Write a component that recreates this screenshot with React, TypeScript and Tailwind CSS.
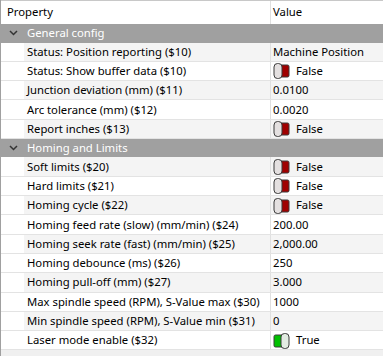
import React from "react";

type Item = { label: string; value: string; toggle?: boolean; on?: boolean };
type Group = { title: string; items: Item[] };

const groups: Group[] = [
  {
    title: "General config",
    items: [
      { label: "Status: Position reporting ($10)", value: "Machine Position" },
      { label: "Status: Show buffer data ($10)", value: "False", toggle: true },
      { label: "Junction deviation (mm) ($11)", value: "0.0100" },
      { label: "Arc tolerance (mm) ($12)", value: "0.0020" },
      { label: "Report inches ($13)", value: "False", toggle: true },
    ],
  },
  {
    title: "Homing and Limits",
    items: [
      { label: "Soft limits ($20)", value: "False", toggle: true },
      { label: "Hard limits ($21)", value: "False", toggle: true },
      { label: "Homing cycle ($22)", value: "False", toggle: true },
      { label: "Homing feed rate (slow) (mm/min) ($24)", value: "200.00" },
      { label: "Homing seek rate (fast) (mm/min) ($25)", value: "2,000.00" },
      { label: "Homing debounce (ms) ($26)", value: "250" },
      { label: "Homing pull-off (mm) ($27)", value: "3.000" },
      { label: "Max spindle speed (RPM), S-Value max ($30)", value: "1000" },
      { label: "Min spindle speed (RPM), S-Value min ($31)", value: "0" },
      { label: "Laser mode enable ($32)", value: "True", toggle: true, on: true },
    ],
  },
];

function Toggle({ on }: { on?: boolean }) {
  if (on) {
    return (
      <svg width="17" height="16" viewBox="0 0 17 16" className="shrink-0">
        <rect x="1" y="2" width="9" height="12" rx="1.5" fill="#00c000" stroke="#3a3a3a" strokeWidth="1" />
        <rect x="8" y="0.5" width="8" height="15" rx="3.5" fill="#e2ebe2" stroke="#3a3a3a" strokeWidth="1" />
      </svg>
    );
  }
  return (
    <svg width="17" height="16" viewBox="0 0 17 16" className="shrink-0">
      <rect x="7" y="2" width="9" height="12" rx="1.5" fill="#a00000" stroke="#3a3a3a" strokeWidth="1" />
      <rect x="1" y="0.5" width="8" height="15" rx="3.5" fill="#e4e0e0" stroke="#3a3a3a" strokeWidth="1" />
    </svg>
  );
}

function Chevron() {
  return (
    <svg width="9" height="6" viewBox="0 0 9 6" className="shrink-0">
      <path d="M1 1 L4.5 4.5 L8 1" fill="none" stroke="#333" strokeWidth="1.5" />
    </svg>
  );
}

export default function App() {
  return (
    <div
      className="w-[383px] h-[356px] overflow-hidden bg-[#f0f0f0] border-l border-[#a0a0a0] text-[11.3px] text-black"
      style={{ fontFamily: '"Noto Sans", "Open Sans", sans-serif' }}
    >
      <div className="flex h-[24px] bg-white border-t border-[#c8c8c8]">
        <div className="w-[270px] flex items-center pl-[6px] border-r border-[#e0e0e0]">Property</div>
        <div className="flex-1 flex items-center pl-[2px]">Value</div>
      </div>
      {groups.map((g) => (
        <div key={g.title}>
          <div className="flex items-center h-[18.5px] bg-[#a0a0a0] text-white border-b border-[#a0a0a0]">
            <div className="w-[23px] flex justify-center pl-[2px]">
              <Chevron />
            </div>
            <div className="pl-[3px] pt-[1px]">{g.title}</div>
          </div>
          {g.items.map((it, i) => {
            const bg = i % 2 === 0 ? "bg-[#f4f4f4]" : "bg-white";
            return (
              <div key={it.label} className="flex h-[19.3px] border-b border-[#e3e3e3] bg-white">
                <div className="w-[23px] bg-white" />
                <div className={`w-[247px] ${bg} flex items-center pl-[3px] pt-[1px] whitespace-nowrap overflow-hidden border-r border-[#e0e0e0]`}>
                  {it.label}
                </div>
                <div className={`flex-1 ${bg} flex items-center pl-[2px] pt-[1px] whitespace-nowrap`}>
                  {it.toggle ? (
                    <span className="flex items-center gap-[6px]">
                      <Toggle on={it.on} />
                      <span>{it.value}</span>
                    </span>
                  ) : (
                    it.value
                  )}
                </div>
              </div>
            );
          })}
        </div>
      ))}
    </div>
  );
}
